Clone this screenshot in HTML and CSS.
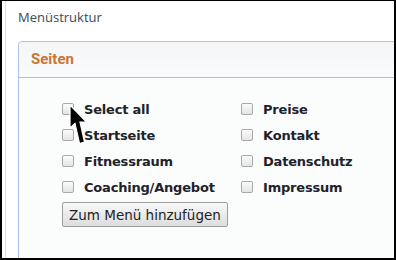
FILE: index.html
```html
<!DOCTYPE html>
<html lang="de">
<head>
    <meta charset="UTF-8">
    <meta name="viewport" content="width=device-width, initial-scale=1.0">
    <title>Menüstruktur</title>
    <link rel="stylesheet" href="styles.css">
</head>
<body>

    <div class="frame">
        <div class="page">
            <h1 class="title">Menüstruktur</h1>

            <!-- Seiten panel -->
            <div class="panel">
                <div class="panel-head">Seiten</div>
                <div class="panel-body">
                    <div class="options">
                        <label class="option"><input type="checkbox"><span>Select all</span></label>
                        <label class="option"><input type="checkbox"><span>Preise</span></label>
                        <label class="option"><input type="checkbox"><span>Startseite</span></label>
                        <label class="option"><input type="checkbox"><span>Kontakt</span></label>
                        <label class="option"><input type="checkbox"><span>Fitnessraum</span></label>
                        <label class="option"><input type="checkbox"><span>Datenschutz</span></label>
                        <label class="option"><input type="checkbox"><span>Coaching/Angebot</span></label>
                        <label class="option"><input type="checkbox"><span>Impressum</span></label>
                    </div>
                    <button class="add-btn">Zum Menü hinzufügen</button>
                </div>
            </div>
        </div>

        <!-- mouse pointer -->
        <svg class="cursor" width="19" height="41" viewBox="0 0 19 41">
            <path d="M1 1 L1 24 L6 19.5 L10.5 39.5 L15.5 38 L11 18 L17.5 18 Z" fill="#000" stroke="#fff" stroke-width="1.2"/>
        </svg>
    </div>

</body>
</html>
```

FILE: styles.css
```css
body {
    margin: 0;
    padding: 0;
    background-color: #fff;
}

.frame {
    position: relative;
    width: 396px;
    height: 260px;
    box-sizing: border-box;
    border: 2px solid #000;
    border-top-width: 1px;
    overflow: hidden;
    background-color: #fff;
}

.page {
    height: 100%;
    margin-left: 3px;
    border-left: 1px solid #dedede;
    padding: 7px 0 0 12px;
    box-sizing: border-box;
}

.title {
    margin: 0 0 15px 0;
    font-family: "Open Sans", sans-serif;
    font-size: 13px;
    font-weight: normal;
    line-height: 18px;
    color: #3b4856;
}

.panel {
    margin-right: -20px;
    height: 300px;
    border: 1px solid #a9c1e2;
    border-radius: 4px 0 0 0;
    background-color: #fbfdfd;
}

.panel-head {
    height: 35px;
    line-height: 35px;
    padding-left: 12px;
    border-bottom: 1px solid #a9c1e2;
    border-radius: 4px 0 0 0;
    background: linear-gradient(#f3f5f7, #fafbfc);
    font-family: Roboto, sans-serif;
    font-size: 15px;
    font-weight: bold;
    color: #c8762f;
}

.panel-body {
    padding: 18px 0 0 43px;
}

.options {
    display: grid;
    grid-template-columns: 179px auto;
    grid-auto-rows: 26px;
}

.option {
    display: flex;
    align-items: center;
    gap: 10px;
    font-family: "DejaVu Sans", sans-serif;
    font-size: 13px;
    font-weight: bold;
    letter-spacing: -0.2px;
    color: #1f222b;
}

.option input {
    appearance: none;
    -webkit-appearance: none;
    width: 12px;
    height: 12px;
    margin: 0 0 1px 0;
    border: 1px solid #a8a8a8;
    border-radius: 2px;
    background: linear-gradient(#fbfbfb, #e4e4e4);
}

.add-btn {
    display: block;
    margin-top: 2px;
    height: 25px;
    padding: 0 6px;
    border: 1px solid #9e9e9e;
    border-radius: 2px;
    background: linear-gradient(#f8f8f8, #dddddd);
    font-family: "DejaVu Sans", sans-serif;
    font-size: 13.5px;
    color: #222;
}

.cursor {
    position: absolute;
    left: 67px;
    top: 103px;
}
```
